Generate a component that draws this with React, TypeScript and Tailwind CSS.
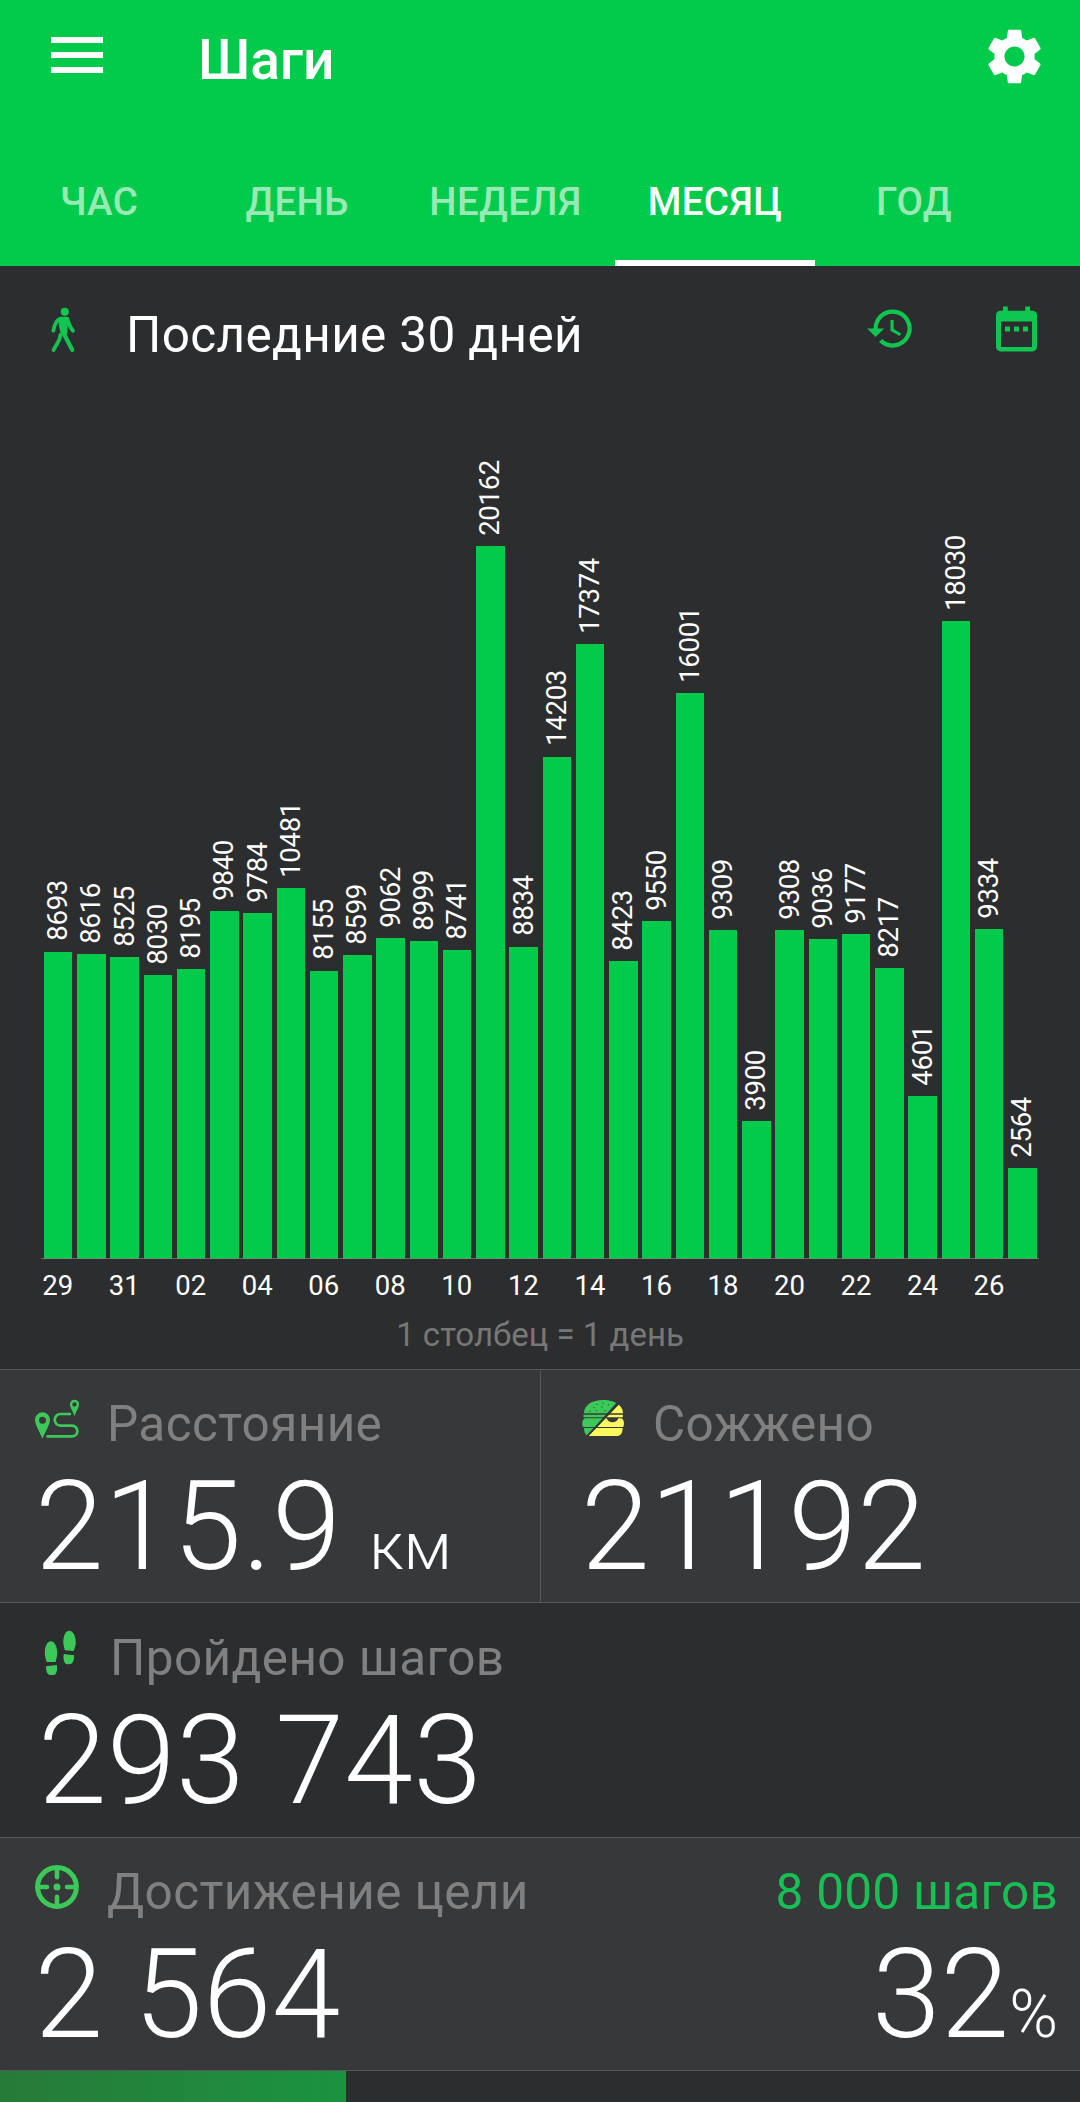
import type { ReactNode } from "react";
import { MdHistory, MdSettings } from "react-icons/md";

const PX_PER_STEP = 0.03537;

const days: { day: string; steps: number }[] = [
  { day: "29", steps: 8693 },
  { day: "30", steps: 8616 },
  { day: "31", steps: 8525 },
  { day: "01", steps: 8030 },
  { day: "02", steps: 8195 },
  { day: "03", steps: 9840 },
  { day: "04", steps: 9784 },
  { day: "05", steps: 10481 },
  { day: "06", steps: 8155 },
  { day: "07", steps: 8599 },
  { day: "08", steps: 9062 },
  { day: "09", steps: 8999 },
  { day: "10", steps: 8741 },
  { day: "11", steps: 20162 },
  { day: "12", steps: 8834 },
  { day: "13", steps: 14203 },
  { day: "14", steps: 17374 },
  { day: "15", steps: 8423 },
  { day: "16", steps: 9550 },
  { day: "17", steps: 16001 },
  { day: "18", steps: 9309 },
  { day: "19", steps: 3900 },
  { day: "20", steps: 9308 },
  { day: "21", steps: 9036 },
  { day: "22", steps: 9177 },
  { day: "23", steps: 8217 },
  { day: "24", steps: 4601 },
  { day: "25", steps: 18030 },
  { day: "26", steps: 9334 },
  { day: "27", steps: 2564 },
];

const tabs = [
  { label: "ЧАС", width: "w-[198px]", active: false },
  { label: "ДЕНЬ", width: "w-[198px]", active: false },
  { label: "НЕДЕЛЯ", width: "w-[219px]", active: false },
  { label: "МЕСЯЦ", width: "w-[200px]", active: true },
  { label: "ГОД", width: "w-[198px]", active: false },
];

function WalkIcon() {
  return (
    <svg className="h-[46px] w-[25px]" viewBox="0 0 25 46" fill="none" stroke="#10c651" strokeLinecap="round" strokeLinejoin="round">
      <circle cx="13.8" cy="4.8" r="4.1" fill="#10c651" stroke="none" />
      <path d="M10 9.8H15.5C17 9.8 18 10.6 18 12L16.6 19 16.4 26.5 13 30 9.4 25.5 7.8 18 7.4 12Z" fill="#10c651" stroke="none" />
      <path d="M9 11.8C5.5 13.2 3.6 16.8 2.4 23.6" strokeWidth="3.8" />
      <path d="M16.4 12C17.6 16.4 18.8 20 22 23.8" strokeWidth="3.8" />
      <path d="M12.2 25.5L21.2 42.8" strokeWidth="4.2" />
      <path d="M9.4 28C9.2 33.5 5.2 37.4 2.6 43" strokeWidth="3.8" />
    </svg>
  );
}

function CalendarIcon() {
  return (
    <svg className="h-[46px] w-[41px]" viewBox="0 0 41 46" fill="#0fc651">
      <path d="M7 .4H11.8V4.8H29.2V.4H34V4.8H36.5A4.5 4.5 0 0 1 41 9.3V41A4.5 4.5 0 0 1 36.500 45.400H4.500A4.500 4.500 0 0 1 0 41V9.300A4.500 4.500 0 0 1 4.500 4.800H7ZM5 15.500V40.900H36V15.500Z" fillRule="evenodd" />
      <path d="M9 20.500h5v5H9zM18 20.500h5v5h-5zM27 20.500h5v5h-5z" />
    </svg>
  );
}

function RouteIcon() {
  return (
    <svg className="h-[40px] w-[45px]" viewBox="0 0 45 40" fill="none">
      <path fill="#3cc95a" fillRule="evenodd" d="M7.500 13.300A7.500 7.500 0 0 1 15 20.800C15 25.500 10.800 32 7.600 39.300H7.200C4.200 32 0 25.500 0 20.800A7.500 7.500 0 0 1 7.500 13.300ZM7.500 17.800a3.500 3.500 0 1 0 0 7 3.500 3.500 0 0 0 0-7Z" />
      <path fill="#3cc95a" fillRule="evenodd" d="M39.500 .7A4.600 4.600 0 0 1 44.100 5.300C44.100 8.300 41.400 12 39.700 16.700H39.300C37.600 12 34.900 8.300 34.900 5.300A4.600 4.600 0 0 1 39.500 .7ZM39.500 3.200a2.200 2.200 0 1 0 0 4.400 2.200 2.200 0 0 0 0-4.400Z" />
      <path stroke="#3cc95a" strokeWidth="2.700" d="M36 15H25.500a5.800 5.800 0 0 0 0 11.600H37a5.300 5.300 0 0 1 0 10.800H11.500" />
    </svg>
  );
}

function BurgerLayers() {
  return (
    <>
      <path d="M2 13.300C2 5 10 0 21 0S41 5 41 13.300Z" />
      <path d="M1.500 14.700H40.800V17.200H1.500Z" />
      <path d="M3 18.200H39.500C42 19.200 42.600 24 41.200 27H1C-.6 24 .4 19.200 3 18.200Z" />
      <path d="M2 28H40.600C40.600 33.500 38.500 36 34.500 36H8C4 36 2 33.500 2 28Z" />
    </>
  );
}

function BurgerIcon() {
  return (
    <svg className="h-[36px] w-[42px]" viewBox="0 0 42 36">
      <defs>
        <clipPath id="burger-left">
          <path d="M0 0H37L4.500 36H0Z" />
        </clipPath>
        <clipPath id="burger-right">
          <path d="M42 0V36H6.600L37.500 3.400Z" />
        </clipPath>
      </defs>
      <g clipPath="url(#burger-left)" fill="#3cc95a">
        <BurgerLayers />
      </g>
      <g clipPath="url(#burger-right)" fill="#fdf85e">
        <BurgerLayers />
      </g>
      <path d="M37.800 2.400L5.200 36" stroke="#303a34" strokeWidth="1.700" />
      <path d="M24.500 18H36.500C35.500 21 33 22.200 30.500 22.200S25.500 21 24.500 18Z" fill="#373839" />
      <g fill="#1f7a38">
        <circle cx="15" cy="4.500" r=".8" />
        <circle cx="21" cy="3" r=".8" />
        <circle cx="26.500" cy="4.800" r=".8" />
        <circle cx="12" cy="7.500" r=".8" />
        <circle cx="20" cy="7" r=".8" />
        <circle cx="8" cy="11.200" r=".8" />
        <circle cx="14.500" cy="10.800" r=".8" />
        <circle cx="23" cy="10.800" r=".8" />
      </g>
    </svg>
  );
}

function FootstepsIcon() {
  return (
    <svg className="h-[46px] w-[33px]" viewBox="0 0 33 46" fill="#3cc95a">
      <path d="M6.800 11.300C10.500 11.300 13.300 16.500 13.200 23 13.100 26.500 12.200 29.500 11.600 32H2.800C1.800 29.500 .8 26.500 .8 23 .8 16.500 3.200 11.300 6.800 11.300Z" />
      <path d="M2 36.200L12.900 35C13.600 40.500 12.400 45 9.400 45H6.800C3.400 45 2 41.500 2 36.200Z" />
      <path d="M25.300 .7C29 .7 31.800 6 31.800 12.300 31.800 15.800 30.600 18.500 29.600 21L20.900 20.200C20.200 17.700 19.300 15 19.300 12 19.300 5.500 21.700 .7 25.300 .7Z" />
      <path d="M19.800 24L30.200 25.300C30.200 30.500 28.800 34.200 25.400 34.200H23.600C20.300 34.200 18.800 29.500 19.800 24Z" />
    </svg>
  );
}

function GoalIcon() {
  return (
    <svg className="h-[44px] w-[44px]" viewBox="0 0 44 44" fill="none" stroke="#3cc95a" strokeWidth="5">
      <circle cx="22" cy="22" r="19.400" />
      <path strokeLinecap="round" strokeWidth="4.600" d="M22 3V12.200M22 41V31.800M3 22H12M41 22H32" />
      <circle cx="22" cy="22" r="3.500" fill="#3cc95a" stroke="none" />
    </svg>
  );
}

function StepsChart() {
  return (
    <section className="px-[41px]">
      <div className="relative flex h-[865px] items-end pl-[0.5px]">
        {days.map((d) => (
          <div key={d.day} className="flex flex-1 flex-col items-center">
            <span className="mb-[10.500px] rotate-180 text-[27.5px] leading-[32px] tracking-[-0.3px] whitespace-nowrap [writing-mode:vertical-rl]">
              {d.steps}
            </span>
            <div className="w-[28.300px] bg-[#02cb4c]" style={{ height: d.steps * PX_PER_STEP }} />
          </div>
        ))}
        <div className="absolute inset-x-0 bottom-0 h-px bg-[#7f7f7f]/70" />
      </div>
      <div className="flex h-[53px] items-center">
        {days.map((d, i) => (
          <div key={d.day} className="flex w-0 flex-1 justify-center text-[27.5px] leading-[33px]">
            {i % 2 === 0 ? d.day : ""}
          </div>
        ))}
      </div>
    </section>
  );
}

function Label({ icon, iconBox, children }: { icon: ReactNode; iconBox: string; children: ReactNode }) {
  return (
    <div className="flex h-[60px] items-center text-[49.5px] leading-[60px] tracking-[0.4px] whitespace-nowrap text-[#808080]">
      <div className={`shrink-0 ${iconBox}`}>{icon}</div>
      {children}
    </div>
  );
}

function Value({ className, children }: { className: string; children: ReactNode }) {
  return (
    <div className={`mt-[10px] h-[126px] text-[123.75px] leading-[126px] font-light whitespace-pre ${className}`}>
      {children}
    </div>
  );
}

export default function App() {
  return (
    <div className="flex h-[2102px] w-[1080px] flex-col overflow-hidden bg-[#2c2d2f] font-['Roboto',sans-serif] text-white">
      <header className="h-[266px] bg-[#02cb4c]">
        <div className="flex h-[120px] items-center pr-[32px] pl-[51px]">
          <div className="-mt-[10px] flex w-[52px] flex-col gap-[9px]">
            <div className="h-[6px] bg-white" />
            <div className="h-[6px] bg-white" />
            <div className="h-[6px] bg-white" />
          </div>
          <h1 className="ml-[95px] text-[55px] leading-[64px] font-medium">Шаги</h1>
          <MdSettings className="-mt-[7px] ml-auto size-[67px]" />
        </div>
        <nav className="mt-[18px] flex h-[128px]">
          {tabs.map((t) => (
            <div
              key={t.label}
              className={`flex items-center justify-center border-y-[6px] border-t-transparent text-[38.5px] leading-[46px] font-medium tracking-[0.3px] ${t.width} ${
                t.active ? "border-b-white text-white" : "border-b-transparent text-white/60"
              }`}
            >
              {t.label}
            </div>
          ))}
        </nav>
      </header>

      <div className="flex h-[128px] items-center pr-[43px] pl-[51px]">
        <WalkIcon />
        <h2 className="mt-[9px] ml-[50px] text-[49.5px] leading-[60px] tracking-[0.35px]">Последние 30 дней</h2>
        <MdHistory className="-mt-[3px] ml-auto size-[51px] text-[#10c651]" />
        <div className="-mt-[2px] ml-[80px]">
          <CalendarIcon />
        </div>
      </div>

      <StepsChart />

      <div className="flex h-[57px] justify-center pt-[2px] text-[33px] leading-[42px] text-[#777777]">
        1 столбец = 1 день
      </div>

      <div className="flex h-[233px] border-t border-[#58595b] bg-[#373839]">
        <div className="w-[540px] pt-[24px]">
          <Label icon={<RouteIcon />} iconBox="ml-[35px] -mt-[10px] w-[72px]">
            Расстояние
          </Label>
          <Value className="pl-[35px]">
            <span className="tracking-[0.4px]">215.9</span> <span className="-ml-[2px] text-[66px]">км</span>
          </Value>
        </div>
        <div className="w-[540px] border-l border-[#58595b] pt-[24px]">
          <Label icon={<BurgerIcon />} iconBox="ml-[41px] -mt-[12px] w-[71px]">
            Сожжено
          </Label>
          <Value className="pl-[40px] tracking-[0.4px]">21192</Value>
        </div>
      </div>

      <div className="h-[235px] border-t border-[#58595b] pt-[25px]">
        <Label icon={<FootstepsIcon />} iconBox="ml-[44px] -mt-[11px] w-[66px]">
          Пройдено шагов
        </Label>
        <Value className="pl-[38px] tracking-[0.3px]">293 743</Value>
      </div>

      <div className="flex h-[233px] justify-between border-t border-[#58595b] bg-[#373839] pt-[24px]">
        <div>
          <Label icon={<GoalIcon />} iconBox="ml-[35px] -mt-[10px] w-[72px]">
            Достижение цели
          </Label>
          <Value className="pl-[34.500px] tracking-[0.3px]">2 564</Value>
        </div>
        <div className="pr-[22px] text-right">
          <div className="h-[60px] text-[49.5px] leading-[60px] tracking-[0.25px] text-[#17bf55]">8 000 шагов</div>
          <Value className="">
            32<span className="text-[66px]">%</span>
          </Value>
        </div>
      </div>

      <div className="h-[32px] border-t border-[#58595b]">
        <div className="h-[31px] w-[32%] bg-linear-to-r from-[#267a38] to-[#1a9340]" />
      </div>
    </div>
  );
}
